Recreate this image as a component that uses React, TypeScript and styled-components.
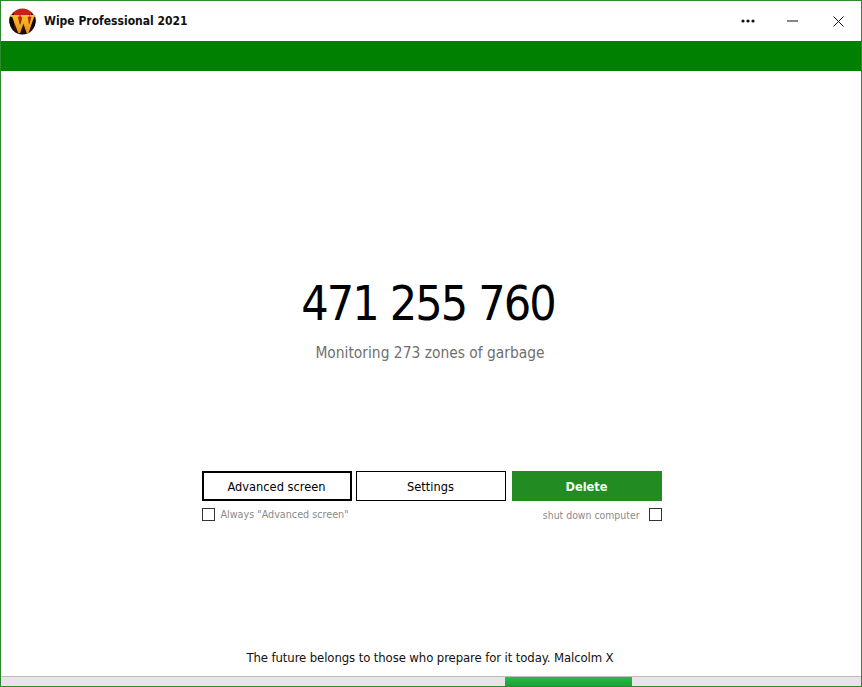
import React, { FC } from "react";
import styled, { createGlobalStyle } from "styled-components";

const GlobalStyle = createGlobalStyle`
  html, body {
    margin: 0;
    padding: 0;
    background: white;
  }
`;

const Window = styled.div`
  box-sizing: border-box;
  width: 862px;
  height: 687px;
  border: 1px solid #2f8a2f;
  background: white;
  display: flex;
  flex-direction: column;
  font-family: "DejaVu Sans Condensed", "DejaVu Sans", sans-serif;
  color: #000;
  overflow: hidden;
`;

const TitleBar = styled.div`
  height: 40px;
  display: flex;
  align-items: center;
  padding-left: 8px;
`;

const Title = styled.div`
  margin-left: 8px;
  font-size: 12px;
  font-weight: bold;
  color: #111;
`;

const WindowButtons = styled.div`
  margin-left: auto;
  display: flex;
`;

const WindowButton = styled.div`
  width: 46px;
  height: 40px;
  display: flex;
  align-items: center;
  justify-content: center;
`;

const GreenBar = styled.div`
  height: 30px;
  background: #008000;
`;

const Main = styled.div`
  flex: 1;
  display: flex;
  flex-direction: column;
  align-items: center;
`;

const Counter = styled.div`
  margin-top: 202px;
  padding-right: 6px;
  font-size: 48px;
  line-height: 60px;
  letter-spacing: -1.9px;
  text-align: center;
`;

const Subtitle = styled.div`
  margin-top: 10px;
  padding-right: 2px;
  font-size: 15.4px;
  line-height: 20px;
  color: #707070;
`;

const Controls = styled.div`
  margin-top: 108px;
  margin-left: 1px;
  width: 460px;
`;

const ButtonRow = styled.div`
  display: flex;
  gap: 4px;
`;

const Button = styled.div<{ $variant?: "default" | "primary" }>`
  box-sizing: border-box;
  width: 150px;
  height: 30px;
  display: flex;
  align-items: center;
  justify-content: center;
  font-size: 12.7px;
  border: ${(p) =>
    p.$variant === "default" ? "2px solid #000" : p.$variant === "primary" ? "none" : "1px solid #000"};
  background: ${(p) => (p.$variant === "primary" ? "#228b22" : "white")};
  color: ${(p) => (p.$variant === "primary" ? "#f2fff2" : "#000")};
  font-weight: ${(p) => (p.$variant === "primary" ? "bold" : "normal")};
  margin-left: ${(p) => (p.$variant === "primary" ? "2px" : "0")};
`;

const OptionRow = styled.div`
  margin-top: 7px;
  display: flex;
  justify-content: space-between;
`;

const Option = styled.div<{ $trailing?: boolean }>`
  display: flex;
  align-items: center;
  gap: ${(p) => (p.$trailing ? "9px" : "6px")};
  font-size: ${(p) => (p.$trailing ? "10.4px" : "10.7px")};
  color: #8a8a8a;
`;

const CheckBox = styled.span`
  box-sizing: border-box;
  width: 13px;
  height: 13px;
  border: 1px solid #333;
  background: white;
`;

const Quote = styled.div`
  margin-top: auto;
  margin-bottom: 10px;
  padding-right: 2px;
  font-size: 13px;
  line-height: 16px;
  letter-spacing: -0.1px;
  color: #111;
`;

const ProgressTrack = styled.div`
  height: 10px;
  box-sizing: border-box;
  background: #e6e6e6;
  border-top: 1px solid #bcbcbc;
  display: flex;
`;

const ProgressFill = styled.div<{ $start: number; $width: number }>`
  margin-left: ${(p) => p.$start}px;
  width: ${(p) => p.$width}px;
  background: linear-gradient(#2fb84a, #14a436);
`;

const Logo: FC = () => (
  <svg width="27" height="27" viewBox="0 0 27 27">
    <defs>
      <linearGradient id="ball" x1="0" y1="0" x2="0" y2="1">
        <stop offset="0" stopColor="#c8201c" />
        <stop offset="0.42" stopColor="#c8201c" />
        <stop offset="0.6" stopColor="#4a1c0c" />
        <stop offset="1" stopColor="#0c0806" />
      </linearGradient>
      <linearGradient id="gold" x1="0" y1="0" x2="0" y2="1">
        <stop offset="0" stopColor="#f6c430" />
        <stop offset="1" stopColor="#e8901c" />
      </linearGradient>
    </defs>
    <circle cx="13.5" cy="13.5" r="13" fill="url(#ball)" />
    <path d="M1 8 L5 5 L5 22 A13 13 0 0 1 1 8 Z M26 8 L22 5 L22 22 A13 13 0 0 0 26 8 Z" fill="#0c0806" />
    <path
      d="M0.8 7 L10.4 7 L10.4 8.6 L8.8 8.9 L11 17 L13.2 10.6 L12.6 8.9 L11.6 8.6 L11.6 7 L20.4 7 L20.4 8.6 L18.6 8.9 L20.2 16.6 L22.4 8.9 L20.9 8.6 L20.9 7 L26.2 7 L26.2 8.6 L25 9 L19.6 25 L17.6 25 L14.4 15.6 L11.2 25 L9.2 25 L3.2 9 L0.8 8.6 Z"
      fill="url(#gold)"
    />
  </svg>
);

const DotsIcon: FC = () => (
  <svg width="18" height="4" viewBox="0 0 18 4">
    <circle cx="6" cy="2" r="1.6" fill="#111" />
    <circle cx="11" cy="2" r="1.6" fill="#111" />
    <circle cx="16" cy="2" r="1.6" fill="#111" />
  </svg>
);

const MinimizeIcon: FC = () => (
  <svg width="11" height="2" viewBox="0 0 11 2">
    <rect width="11" height="1" y="0.5" fill="#111" />
  </svg>
);

const CloseIcon: FC = () => (
  <svg width="11" height="11" viewBox="0 0 11 11">
    <path d="M0.5 0.5 L10.5 10.5 M10.5 0.5 L0.5 10.5" stroke="#111" strokeWidth="1" fill="none" />
  </svg>
);

const App: FC = () => (
  <>
    <GlobalStyle />
    <Window>
      <TitleBar>
        <Logo />
        <Title>Wipe Professional 2021</Title>
        <WindowButtons>
          <WindowButton>
            <DotsIcon />
          </WindowButton>
          <WindowButton>
            <MinimizeIcon />
          </WindowButton>
          <WindowButton>
            <CloseIcon />
          </WindowButton>
        </WindowButtons>
      </TitleBar>
      <GreenBar />
      <Main>
        <Counter>471 255 760</Counter>
        <Subtitle>Monitoring 273 zones of garbage</Subtitle>
        <Controls>
          <ButtonRow>
            <Button $variant="default">Advanced screen</Button>
            <Button>Settings</Button>
            <Button $variant="primary">Delete</Button>
          </ButtonRow>
          <OptionRow>
            <Option>
              <CheckBox />
              Always "Advanced screen"
            </Option>
            <Option $trailing>
              shut down computer
              <CheckBox />
            </Option>
          </OptionRow>
        </Controls>
        <Quote>The future belongs to those who prepare for it today. Malcolm X</Quote>
      </Main>
      <ProgressTrack>
        <ProgressFill $start={504} $width={127} />
      </ProgressTrack>
    </Window>
  </>
);

export default App;
